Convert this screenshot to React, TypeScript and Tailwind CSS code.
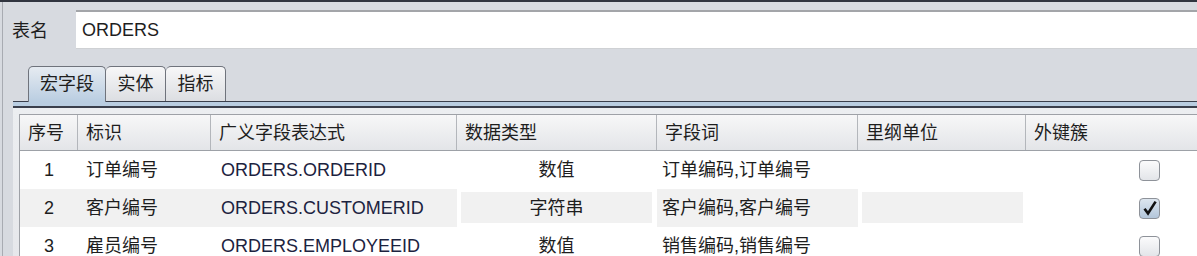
import React from 'react';

const FONT = "font-['Liberation_Sans','Noto_Sans_CJK_SC',sans-serif]";

type Row = {
  no: number;
  name: string;
  expr: string;
  type: string;
  words: string;
  unit: string;
  fk: boolean;
};

const rows: Row[] = [
  { no: 1, name: '订单编号', expr: 'ORDERS.ORDERID', type: '数值', words: '订单编码,订单编号', unit: '', fk: false },
  { no: 2, name: '客户编号', expr: 'ORDERS.CUSTOMERID', type: '字符串', words: '客户编码,客户编号', unit: '', fk: true },
  { no: 3, name: '雇员编号', expr: 'ORDERS.EMPLOYEEID', type: '数值', words: '销售编码,销售编号', unit: '', fk: false },
];

const headers = ['序号', '标识', '广义字段表达式', '数据类型', '字段词', '里纲单位', '外键簇'];

const Checkbox = ({ checked }: { checked: boolean }) => (
  <div
    className={`w-[21px] h-[21px] rounded-[4px] border border-[#8e9299] flex items-center justify-center ${
      checked ? 'bg-gradient-to-b from-[#dde6ef] to-[#b3c6da]' : 'bg-gradient-to-b from-[#fbfbfc] to-[#e3e5e9]'
    }`}
  >
    {checked && (
      <svg width="16" height="16" viewBox="0 0 16 16">
        <path d="M2.5 8.8 L6 13.4 L13.6 1.6" fill="none" stroke="#111" strokeWidth="2.6" strokeLinejoin="miter" />
      </svg>
    )}
  </div>
);

export default function App() {
  return (
    <div className={`w-[1197px] h-[256px] overflow-hidden bg-[#d7dae0] text-[18px] text-[#1e1e1e] ${FONT}`}>
      <div className="h-[2px] bg-[#30343f]" />
      <div className="ml-[2px] h-full border-l border-[#a8abb2]">
        {/* table name */}
        <div className="flex items-center pt-[8px]">
          <div className="w-[73px] pl-[9px] leading-none pt-[2px]">表名</div>
          <div className="flex-1 h-[39px] bg-white border-t-[2px] border-[#a3a5a9] border-b border-b-[#cfd1d4] flex items-center pl-[6px] pt-[1px]">
            ORDERS
          </div>
        </div>

        {/* tabs */}
        <div className="mt-[17px] ml-[10px]">
          <div className="flex items-end h-[36px] border-b border-[#3a3f4c] pl-[15px]">
            <div className="relative -mb-px w-[78px] h-[36px] rounded-t-[5px] border border-b-0 border-[#6f737c] bg-gradient-to-b from-[#e6ebf1] to-[#b9cde1] flex items-center justify-center z-10">
              宏字段
            </div>
            <div className="w-[60px] h-[35px] rounded-t-[5px] border border-b-0 border-l-0 border-[#6f737c] bg-gradient-to-b from-[#f7f7f8] to-[#dcdee2] flex items-center justify-center">
              实体
            </div>
            <div className="w-[60px] h-[35px] rounded-t-[5px] border border-b-0 border-l-0 border-[#6f737c] bg-gradient-to-b from-[#f7f7f8] to-[#dcdee2] flex items-center justify-center">
              指标
            </div>
          </div>
          <div className="h-[4px] bg-[#b9cde1]" />
          <div className="h-[2px] bg-[#3a3f4c]" />

          {/* panel */}
          <div className="bg-gradient-to-b from-[#eceef1] to-[#e6e7eb] pl-[6px] pt-[6px]">
            <div className="border-l border-t border-[#9ea1a7] bg-white">
              <div className="grid grid-cols-[58px_133px_246px_200px_201px_168px_200px] h-[36px] bg-gradient-to-b from-[#f7f7f8] to-[#e3e5e8] border-b border-[#9da1a7]">
                {headers.map((h) => (
                  <div key={h} className="flex items-center pl-[8px] pt-[1px] border-r border-[#b3b6bb] whitespace-nowrap">
                    {h}
                  </div>
                ))}
              </div>
              {rows.map((r, i) => {
                const alt = i % 2 === 1;
                const full = alt ? 'bg-[#f1f1f1]' : 'bg-white';
                return (
                  <div key={r.no} className="grid grid-cols-[58px_133px_246px_200px_201px_168px_200px] h-[38px]">
                    <div className={`flex items-center justify-center pt-[1px] ${full}`}>{r.no}</div>
                    <div className={`flex items-center pl-[8px] pt-[1px] ${full}`}>{r.name}</div>
                    <div className={`flex items-center pl-[10px] pt-[1px] text-[#1c2340] ${full}`}>{r.expr}</div>
                    <div className="bg-white pl-[4px] pr-[5px] pt-[3px] pb-[4px]">
                      <div className={`h-full flex items-center justify-center pt-[1px] ${full}`}>{r.type}</div>
                    </div>
                    <div className={`flex items-center pl-[5px] pt-[1px] whitespace-nowrap ${full}`}>{r.words}</div>
                    <div className="bg-white pl-[4px] pr-[3px] pt-[3px] pb-[4px]">
                      <div className={`h-full flex items-center ${full}`}>{r.unit}</div>
                    </div>
                    <div className="bg-white flex items-center pl-[113px]">
                      <Checkbox checked={r.fk} />
                    </div>
                  </div>
                );
              })}
            </div>
          </div>
        </div>
      </div>
    </div>
  );
}
